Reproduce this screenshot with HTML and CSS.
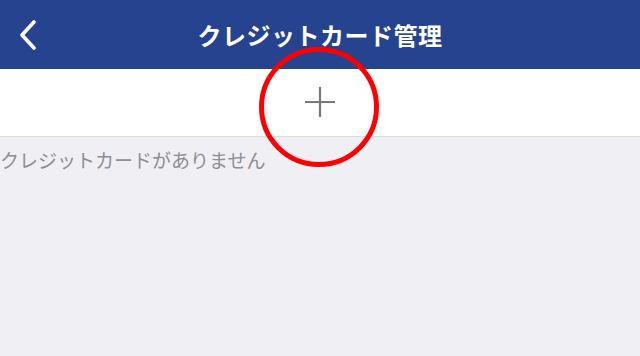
FILE: index.html
```html
<!DOCTYPE html>
<html lang="ja">
<head>
    <meta charset="UTF-8">
    <meta name="viewport" content="width=device-width, initial-scale=1.0">
    <title>クレジットカード管理</title>
    <link rel="stylesheet" href="styles.css">
</head>
<body>
    <div id="header">
        <button class="back" aria-label="戻る">
            <svg width="18" height="30" viewBox="0 0 18 30">
                <polyline points="15,2 3,15 15,28" fill="none" stroke="#fff" stroke-width="3.6" stroke-linecap="round" stroke-linejoin="round"/>
            </svg>
        </button>
        <h1 class="title">クレジットカード管理</h1>
    </div>
    <div id="add-row">
        <button class="add" aria-label="追加">
            <svg width="32" height="32" viewBox="0 0 32 32">
                <path d="M1 16H31M16 1V31" stroke="#7a7a7a" stroke-width="2.2"/>
            </svg>
            <span class="mark"></span>
        </button>
    </div>
    <div id="content">
        <p class="empty">クレジットカードがありません</p>
    </div>
</body>
</html>
```

FILE: styles.css
```css
html, body {
    margin: 0;
    height: 100%;
}

body {
    background-color: #efeff4;
    font-family: "Noto Sans CJK JP", "Noto Sans", sans-serif;
}

#header {
    height: 69px;
    background-color: #26438f;
    display: flex;
    align-items: center;
    justify-content: center;
    position: relative;
}

.back {
    position: absolute;
    left: 19px;
    top: 20px;
    padding: 0;
    border: 0;
    background: none;
    display: flex;
}

.title {
    margin: 0;
    color: #fff;
    font-size: 24px;
    font-weight: bold;
    letter-spacing: 0.5px;
    line-height: 1;
}

#add-row {
    height: 67px;
    background-color: #fff;
    border-bottom: 1px solid #dcdce0;
    display: flex;
    justify-content: center;
    align-items: center;
}

.add {
    position: relative;
    padding: 0;
    border: 0;
    background: none;
    display: flex;
    margin-top: -1px;
}

.mark {
    position: absolute;
    left: -45px;
    top: -39px;
    width: 110px;
    height: 110px;
    border: 5px solid #ff0000;
    border-radius: 50%;
}

.empty {
    margin: 0;
    padding: 11px 0 0 0;
    color: #8e8e93;
    font-size: 19px;
    line-height: 24px;
}
```
